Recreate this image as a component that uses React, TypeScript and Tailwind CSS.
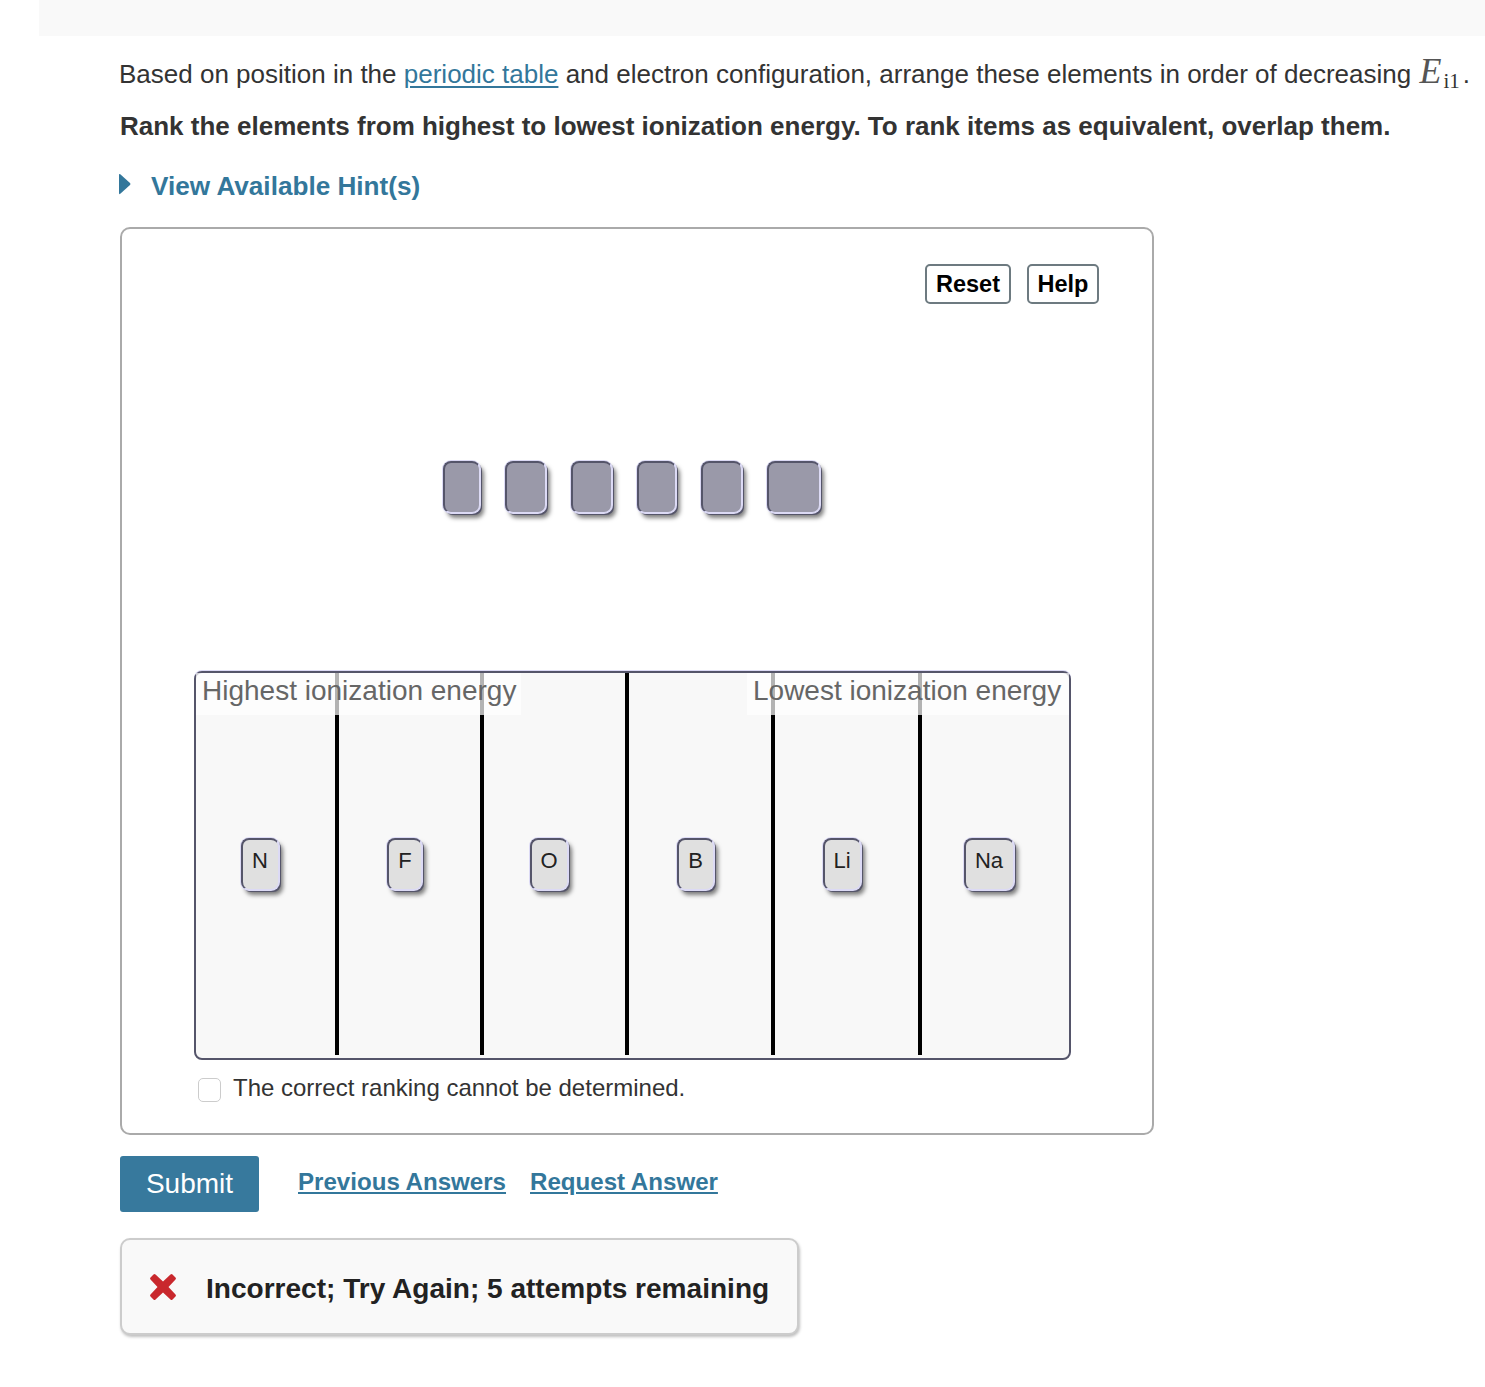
import React from "react";

function Chip({ label, w, tray }: { label?: string; w: string; tray?: boolean }) {
  return (
    <div
      className={`${w} h-[52px] shrink-0 rounded-[8px] border-t-2 border-l-2 border-r-[1.5px] border-b-[1.5px] border-t-[#55556a] border-l-[#55556a] border-r-[#dcdaf5] border-b-[#dcdaf5] shadow-[0_0_0_1px_#dcdaf5,2px_2px_0_0_#55556a,4px_5px_4px_0_rgba(0,0,0,0.5)] ${tray ? "bg-[#9a99a9]" : "bg-[#e0e0e0]"} flex justify-center pt-[7px] text-[22px] leading-[28px] text-[#222]`}
    >
      {label}
    </div>
  );
}

const cols = [
  { label: "N", w: "w-[38px]", col: "w-[143px] pr-[12px]" },
  { label: "F", w: "w-[35px]", col: "w-[145px] pr-[10px]" },
  { label: "O", w: "w-[38px]", col: "w-[145px] pr-[12px]" },
  { label: "B", w: "w-[37px]", col: "w-[146px] pr-[10px]" },
  { label: "Li", w: "w-[38px]", col: "w-[147px] pr-[10px]" },
  { label: "Na", w: "w-[50px]", col: "flex-1 pr-[14px]" },
];

export default function App() {
  return (
    <div className="relative h-[1387px] overflow-hidden bg-white font-['Liberation_Sans',sans-serif] text-[#333]">
      <div className="ml-[39px] h-9 bg-[#f9f9f9]" />
      <div className="pl-[120px]">
        <p className="mt-[17px] -ml-[1px] h-9 whitespace-nowrap text-[26px] leading-9">
          Based on position in the{" "}
          <a className="text-[#33779b] underline underline-offset-[3px]">periodic table</a> and electron configuration, arrange these elements in order of decreasing{" "}
          <span className="ml-[1px] font-['Liberation_Serif',serif] text-[36px] italic leading-none text-[#555]">E</span>
          <span className="ml-[2px] font-['Liberation_Serif',serif] text-[21px] relative top-[5px] leading-none">i1</span>
          <span className="ml-[3px]">.</span>
        </p>
        <p className="mt-[19px] h-9 whitespace-nowrap text-[26px] font-bold leading-9">
          Rank the elements from highest to lowest ionization energy. To rank items as equivalent, overlap them.
        </p>
        <div className="mt-6 -ml-[1px] flex h-9 items-center text-[26.15px] font-bold leading-9 text-[#33779b]">
          <svg className="mr-[20px] mb-1 h-[24px] w-[12px]" viewBox="0 0 12 24" aria-hidden="true">
            <path d="M1 2 L11 11 Q12 12 11 13 L1 22 Q0 22.5 0 21 L0 3 Q0 1.500 1 2 Z" fill="#33779b" />
          </svg>
          View Available Hint(s)
        </div>
        <div className="mt-[23px] h-[908px] w-[1034px] rounded-[10px] border-2 border-[#aaaaaa] pt-[35px]">
          <div className="flex justify-end gap-4 pr-[53px]">
            <button className="h-10 w-[86px] rounded-[5px] border-2 border-[#6d7a80] pt-[1px] text-[23.5px] font-bold leading-none text-black">Reset</button>
            <button className="h-10 w-[72px] rounded-[5px] border-2 border-[#6d7a80] pt-[1px] text-[23.5px] font-bold leading-none text-black">Help</button>
          </div>
          <div className="mt-[157px] ml-[321px] flex gap-[25px]">
            <Chip tray w="w-[37px]" />
            <Chip tray w="w-[41px]" />
            <Chip tray w="w-[41px]" />
            <Chip tray w="w-[39px]" />
            <Chip tray w="w-[41px]" />
            <Chip tray w="w-[53px]" />
          </div>
          <div className="relative mt-[158px] ml-[72px] h-[389px] w-[877px] rounded-[8px] border-2 border-[#55556a] bg-[#f8f8f8] pb-[3px] shadow-[0_-1px_0_0_#dcdaf5]">
            <div className="flex h-full">
              {cols.map((c, i) => (
                <div
                  key={c.label}
                  className={`${c.col} flex items-center justify-center pb-[1px] ${i < 5 ? "border-r-4 border-black" : ""}`}
                >
                  <Chip label={c.label} w={c.w} />
                </div>
              ))}
            </div>
            <div className="absolute left-0 top-0 h-[42px] w-[325px] bg-white/70 pl-[6px] text-[28px] leading-[36px] text-[#666]">
              Highest ionization energy
            </div>
            <div className="absolute right-0 top-0 h-[42px] w-[322px] whitespace-nowrap bg-white/70 pl-[6px] text-[28px] leading-[36px] text-[#666]">
              Lowest ionization energy
            </div>
          </div>
          <label className="mt-4 ml-[76px] flex items-center text-[24px] leading-[24px]">
            <input type="checkbox" className="mr-3 h-6 w-[23px] appearance-none rounded-[5px] border border-[#cccccc] bg-white" />
            <span className="pb-1">The correct ranking cannot be determined.</span>
          </label>
        </div>
        <div className="mt-[21px] flex items-center">
          <button className="h-14 w-[139px] rounded-[3px] bg-[#37799d] text-[28px] text-white">Submit</button>
          <a className="ml-[39px] -mt-[4px] text-[24.1px] font-bold text-[#33779b] underline">Previous Answers</a>
          <a className="ml-[24px] -mt-[4px] text-[24.1px] font-bold text-[#33779b] underline">Request Answer</a>
        </div>
        <div className="mt-[26px] flex h-[97px] w-[679px] items-center rounded-[10px] border-2 border-[#cccccc] bg-[#f9f9f9] pl-[27px] shadow-[1px_2px_3px_0_rgba(0,0,0,0.25)]">
          <svg className="mr-[29px] h-7 w-7 shrink-0" viewBox="0 0 28 28" aria-hidden="true">
            <path d="M6.500 1.500 L14 8.500 L21.500 1.500 Q22.500 .5 23.500 1.500 L26.500 4.500 Q27.500 5.500 26.500 6.500 L19.500 14 L26.500 21.500 Q27.500 22.500 26.500 23.500 L23.500 26.500 Q22.500 27.500 21.500 26.500 L14 19.500 L6.500 26.500 Q5.500 27.500 4.500 26.500 L1.500 23.500 Q.5 22.500 1.500 21.500 L8.500 14 L1.500 6.500 Q.5 5.500 1.500 4.500 L4.500 1.500 Q5.500 .5 6.500 1.500 Z" fill="#c9282d" />
          </svg>
          <span className="mt-[5px] whitespace-nowrap text-[28.05px] font-bold text-[#222]">Incorrect; Try Again; 5 attempts remaining</span>
        </div>
      </div>
    </div>
  );
}
